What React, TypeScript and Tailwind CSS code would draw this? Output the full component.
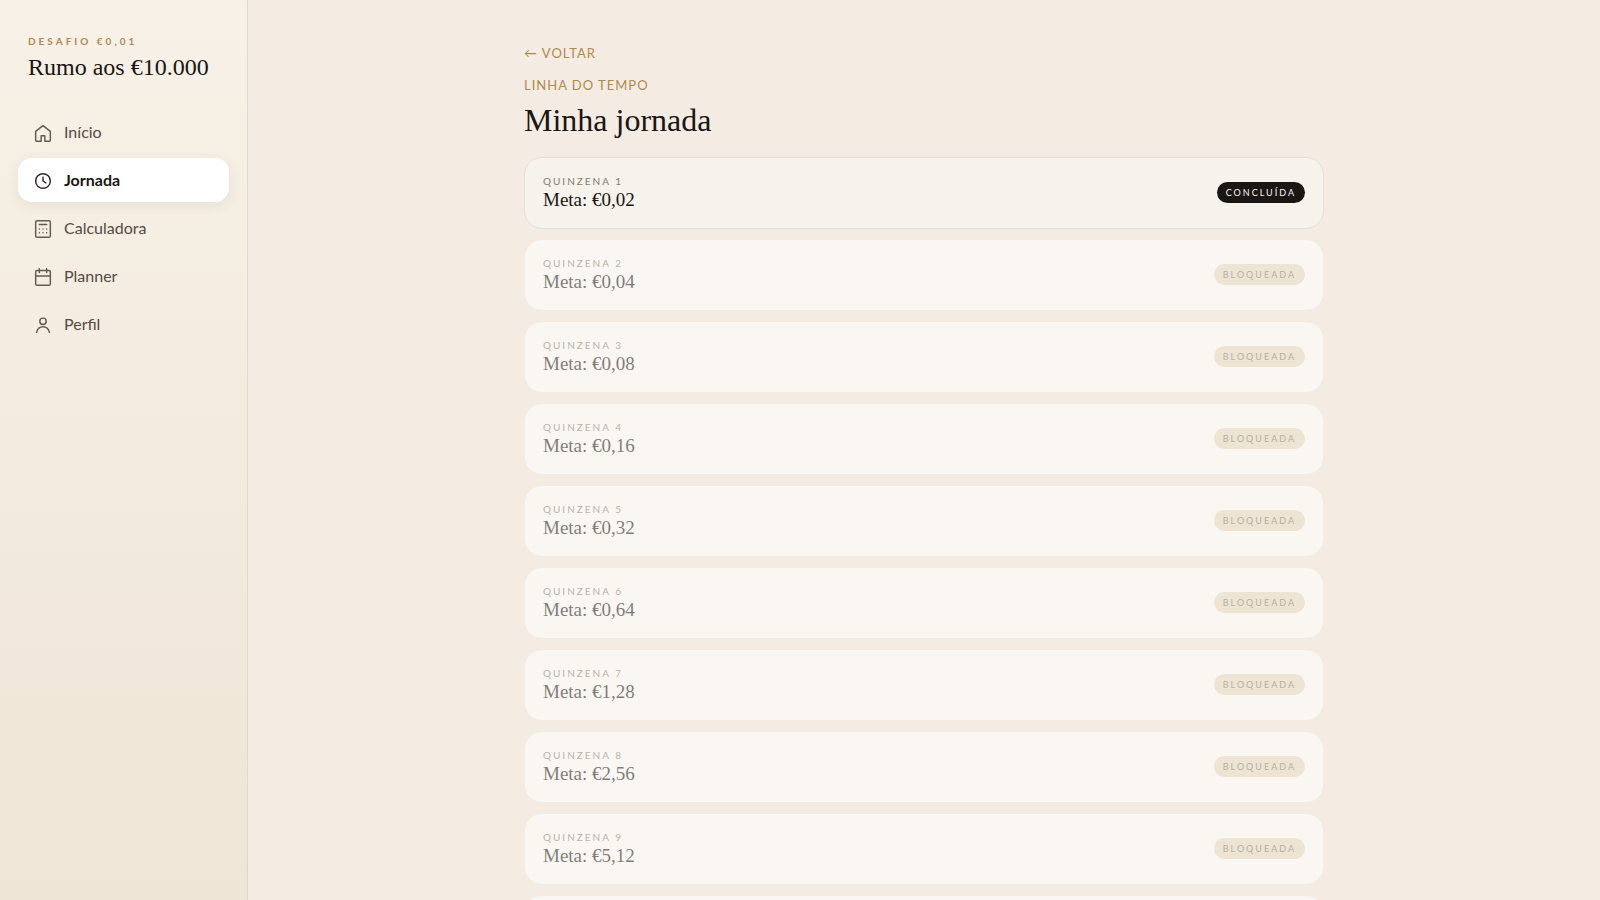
import { useState } from 'react';
import type { ReactNode } from 'react';

type IconName = 'home' | 'clock' | 'calculator' | 'calendar' | 'user';

const ICONS: Record<IconName, ReactNode> = {
  home: <path d="M4 10.3 12 4l8 6.3V20a1 1 0 0 1-1 1h-5v-6h-4v6H5a1 1 0 0 1-1-1z" />,
  clock: (
    <>
      <circle cx="12" cy="12" r="8" />
      <path d="M12 8v4l3 2" />
    </>
  ),
  calculator: (
    <>
      <rect x="4" y="3" width="16" height="18" rx="1.5" />
      <path d="M8 7h8M8 12h.01M12 12h.01M16 12h.01M8 16h.01M12 16h.01M16 16h.01" />
    </>
  ),
  calendar: (
    <>
      <rect x="4" y="5" width="16" height="16" rx="1.5" />
      <path d="M4 11h16M8 3v4M16 3v4" />
    </>
  ),
  user: (
    <>
      <circle cx="12" cy="8" r="3.5" />
      <path d="M5 20c1-4 4-6 7-6s6 2 7 6" />
    </>
  )
};

const NAV_ITEMS: { id: string; label: string; icon: IconName }[] = [
  { id: 'inicio', label: 'Início', icon: 'home' },
  { id: 'jornada', label: 'Jornada', icon: 'clock' },
  { id: 'calculadora', label: 'Calculadora', icon: 'calculator' },
  { id: 'planner', label: 'Planner', icon: 'calendar' },
  { id: 'perfil', label: 'Perfil', icon: 'user' }
];

const TOTAL = 10;
const COMPLETED = 1;

// Each fortnight doubles the previous goal, starting from one cent
const QUINZENAS = Array.from({ length: TOTAL }, (_, i) => ({
  number: i + 1,
  goal: (0.01 * 2 ** (i + 1)).toFixed(2).replace('.', ','),
  done: i < COMPLETED
}));

function NavIcon({ name }: { name: IconName }) {
  return (
    <svg
      viewBox="0 0 24 24"
      fill="none"
      stroke="currentColor"
      strokeWidth="1.6"
      strokeLinecap="round"
      strokeLinejoin="round"
      className="size-[22px] shrink-0 opacity-90"
      aria-hidden="true"
    >
      {ICONS[name]}
    </svg>
  );
}

function Sidebar() {
  const [active, setActive] = useState('jornada');

  return (
    <aside className="sticky top-0 h-screen w-[248px] shrink-0 border-r border-[#e0d9ce] bg-gradient-to-b from-[#f8f1e7] to-[#eee5d6] px-[18px] pt-8">
      <div className="px-[10px]">
        <p className="text-[10px] leading-[18px] font-bold tracking-[3px] text-[#ae8a50] uppercase">
          Desafio €0,01
        </p>
        <p className="mt-px font-['Liberation_Serif',serif] text-2xl leading-8 text-[#1a1614]">
          Rumo aos €10.000
        </p>
      </div>

      <nav className="mt-[27px] flex flex-col gap-1">
        {NAV_ITEMS.map((item) => (
          <a
            key={item.id}
            href={`#${item.id}`}
            onClick={() => setActive(item.id)}
            aria-current={active === item.id ? 'page' : undefined}
            className={
              active === item.id
                ? 'flex items-start gap-[10px] rounded-[14px] bg-white px-[14px] pt-3 pb-[10px] text-base leading-5 font-bold text-[#1a1614] shadow-[0_4px_14px_rgba(80,60,30,0.08)]'
                : 'flex items-start gap-[10px] rounded-[14px] px-[14px] pt-3 pb-[10px] text-base leading-5 text-[#554b42] hover:bg-white/50'
            }
          >
            <NavIcon name={item.icon} />
            {item.label}
          </a>
        ))}
      </nav>
    </aside>
  );
}

export default function App() {
  return (
    <div className="flex min-h-screen bg-[#f4ece2] font-['Lato',sans-serif] text-[#1a1614]">
      <Sidebar />

      <main className="min-w-0 flex-1 px-6 pt-10 pb-12">
        <div className="mx-auto max-w-[800px]">
          {/* Page header */}
          <a
            href="#inicio"
            className="inline-block text-[13px] leading-5 tracking-[1px] text-[#ae8a50] uppercase"
          >
            ← Voltar
          </a>
          <p className="mt-[11px] text-[13px] leading-5 tracking-[1px] text-[#ae8a50] uppercase">
            Linha do tempo
          </p>
          <h1 className="mt-[5px] font-['Liberation_Serif',serif] text-[32px] leading-10">
            Minha jornada
          </h1>

          <ol className="mt-[17px] flex flex-col gap-[10px]">
            {QUINZENAS.map((q) => (
              <li
                key={q.number}
                className={
                  q.done
                    ? 'flex items-center justify-between rounded-[18px] border border-[#e5e1d8] bg-[#f6f2ec] px-[18px] py-4'
                    : 'flex items-center justify-between rounded-[18px] border border-[#f2ece3] bg-[#faf7f2] px-[18px] py-4'
                }
              >
                <div className={q.done ? '' : 'opacity-55'}>
                  <p className="text-[10px] leading-[14px] tracking-[2px] text-[#857a70] uppercase">
                    Quinzena {q.number}
                  </p>
                  <p className="font-['Liberation_Serif',serif] text-[19px] leading-6">
                    Meta: €{q.goal}
                  </p>
                </div>
                <span
                  className={
                    q.done
                      ? 'mb-0.5 rounded-full bg-[#1a1614] px-[9px] text-[9px] leading-[21px] tracking-[2px] text-[#faf7f2] uppercase'
                      : 'mb-0.5 rounded-full bg-[#ede4d4] px-[9px] text-[9px] leading-[21px] tracking-[2px] text-[#b9afa0] uppercase'
                  }
                >
                  {q.done ? 'Concluída' : 'Bloqueada'}
                </span>
              </li>
            ))}
          </ol>
        </div>
      </main>
    </div>
  );
}
